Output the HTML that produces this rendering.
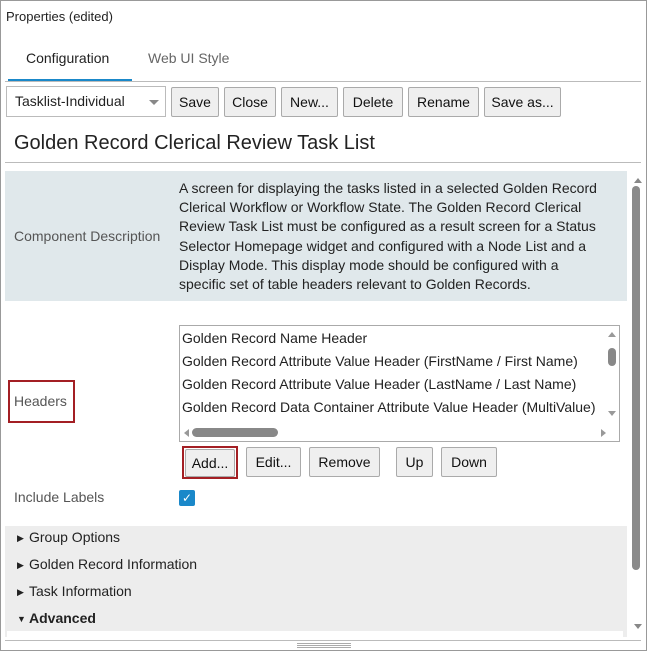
<!DOCTYPE html>
<html><head><style>
*{box-sizing:border-box;margin:0;padding:0}
body{width:647px;height:651px;overflow:hidden;background:#fff;font-family:"Liberation Sans",sans-serif;color:#222;position:relative}
.a{position:absolute;white-space:nowrap}
.btn{position:absolute;top:87px;height:30px;border:1px solid #aaa;background:#efefef;border-radius:2px;font-size:14px;text-align:center;line-height:28px;color:#111}
.b2{top:447px}
.row{height:27px;line-height:27px}
.tri{display:inline-block;width:12px;font-size:9px;vertical-align:1px}
</style></head><body>
<div class="a" style="left:0;top:0;width:647px;height:651px;border:1px solid #999"></div>
<div class="a" style="left:6px;top:9px;font-size:13px">Properties (edited)</div>
<div class="a" style="left:26px;top:50px;font-size:14px">Configuration</div>
<div class="a" style="left:148px;top:50px;font-size:14px;color:#666">Web UI Style</div>
<div class="a" style="left:8px;top:79px;width:124px;height:3px;background:#1a88c9"></div>
<div class="a" style="left:5px;top:81px;width:636px;height:1px;background:#bbb"></div>
<div class="a" style="left:6px;top:86px;width:160px;height:31px;border:1px solid #bbb;font-size:14px;line-height:29px;padding-left:8px">Tasklist-Individual<span style="position:absolute;left:142px;top:13px;border:5px solid transparent;border-top:5px solid #888;border-bottom:0"></span></div>
<div class="btn" style="left:171px;width:48px">Save</div>
<div class="btn" style="left:224px;width:52px">Close</div>
<div class="btn" style="left:281px;width:57px">New...</div>
<div class="btn" style="left:343px;width:60px">Delete</div>
<div class="btn" style="left:408px;width:71px">Rename</div>
<div class="btn" style="left:484px;width:77px">Save as...</div>
<div class="a" style="left:14px;top:132px;font-size:20px;color:#222">Golden Record Clerical Review Task List</div>
<div class="a" style="left:5px;top:162px;width:636px;height:1px;background:#bbb"></div>
<div class="a" style="left:634px;top:178px;border:4px solid transparent;border-bottom:5px solid #888;border-top:0"></div>
<div class="a" style="left:632px;top:186px;width:8px;height:384px;background:#8a8a8a;border-radius:4px"></div>
<div class="a" style="left:634px;top:624px;border:4px solid transparent;border-top:5px solid #888;border-bottom:0"></div>
<div class="a" style="left:5px;top:171px;width:622px;height:130px;background:#e0e8eb"></div>
<div class="a" style="left:14px;top:228px;font-size:14px;color:#555">Component Description</div>
<div class="a" style="left:179px;top:179px;font-size:14px;line-height:19.2px;color:#222">A screen for displaying the tasks listed in a selected Golden Record<br>Clerical Workflow or Workflow State. The Golden Record Clerical<br>Review Task List must be configured as a result screen for a Status<br>Selector Homepage widget and configured with a Node List and a<br>Display Mode. This display mode should be configured with a<br>specific set of table headers relevant to Golden Records.</div>
<div class="a" style="left:8px;top:380px;width:67px;height:43px;border:2px solid #a31f24"></div>
<div class="a" style="left:14px;top:393px;font-size:14px;color:#555">Headers</div>
<div class="a" style="left:179px;top:325px;width:441px;height:117px;border:1px solid #aaa;overflow:hidden">
<div style="position:absolute;left:2px;top:1px;font-size:14px;line-height:23px;color:#222;width:422px;overflow:hidden">Golden Record Name Header<br>Golden Record Attribute Value Header (FirstName / First Name)<br>Golden Record Attribute Value Header (LastName / Last Name)<br>Golden Record Data Container Attribute Value Header (MultiValue)<br>Golden Record Data Container Attribute Value Header (MultiV)</div>
<div style="position:absolute;left:0;top:97px;width:440px;height:19px;background:#fff"></div>
<div style="position:absolute;left:12px;top:102px;width:86px;height:9px;background:#888;border-radius:5px"></div>
<div style="position:absolute;left:4px;top:103px;border:4px solid transparent;border-right:5px solid #999;border-left:0"></div>
<div style="position:absolute;left:421px;top:103px;border:4px solid transparent;border-left:5px solid #999;border-right:0"></div>
<div style="position:absolute;left:428px;top:6px;border:4px solid transparent;border-bottom:5px solid #999;border-top:0"></div>
<div style="position:absolute;left:428px;top:85px;border:4px solid transparent;border-top:5px solid #999;border-bottom:0"></div>
<div style="position:absolute;left:428px;top:22px;width:8px;height:18px;background:#888;border-radius:4px"></div>
</div>
<div class="a" style="left:182px;top:446px;width:56px;height:33px;border:2px solid #a31f24"></div>
<div class="btn b2" style="left:185px;top:449px;width:50px;height:28px;line-height:26px">Add...</div>
<div class="btn b2" style="left:246px;width:55px">Edit...</div>
<div class="btn b2" style="left:309px;width:71px">Remove</div>
<div class="btn b2" style="left:396px;width:37px">Up</div>
<div class="btn b2" style="left:441px;width:56px">Down</div>
<div class="a" style="left:14px;top:489px;font-size:14px;color:#555">Include Labels</div>
<div class="a" style="left:179px;top:490px;width:16px;height:16px;background:#1a88c9;border-radius:2px;color:#fff;font-size:12px;line-height:16px;text-align:center">✓</div>
<div class="a" style="left:5px;top:526px;width:622px;height:105px;background:#ededed"></div>
<div class="a" style="left:5px;top:631px;width:622px;height:6px;background:#fff;border-left:2px solid #ededed;border-right:4px solid #ededed"></div>
<div class="a" style="left:17px;top:524px;font-size:14px;color:#222">
<div class="row"><span class="tri">▶</span>Group Options</div>
<div class="row"><span class="tri">▶</span>Golden Record Information</div>
<div class="row"><span class="tri">▶</span>Task Information</div>
<div class="row"><b><span class="tri">▼</span>Advanced</b></div></div>
<div class="a" style="left:5px;top:640px;width:636px;height:1px;background:#bbb"></div>
<div class="a" style="left:297px;top:643px;width:54px;height:5px;border-top:1px solid #aaa;border-bottom:1px solid #aaa"></div>
<div class="a" style="left:297px;top:645px;width:54px;height:1px;background:#aaa"></div>
</body></html>
